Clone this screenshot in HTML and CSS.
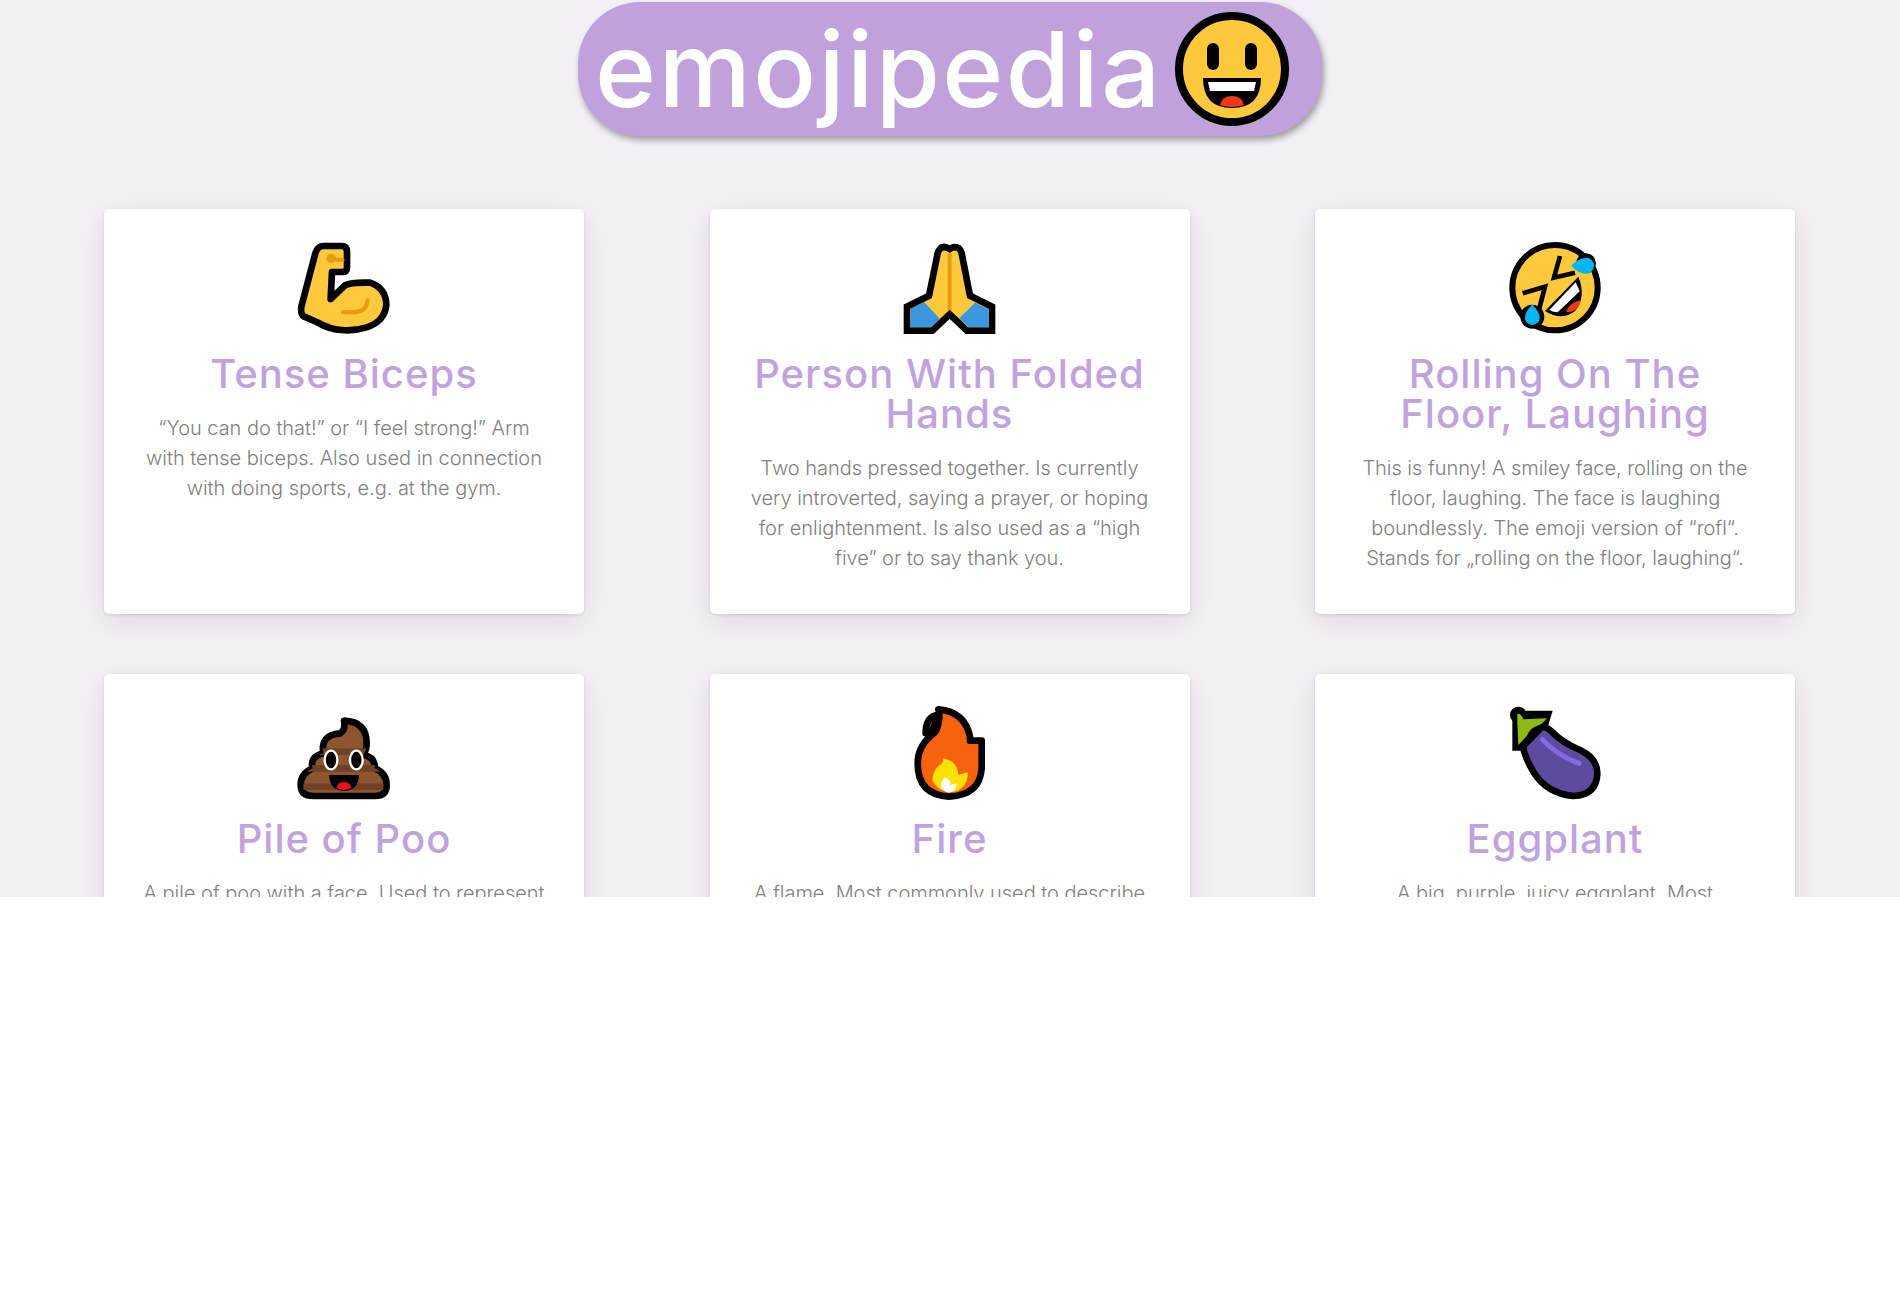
FILE: index.html
```html
<!DOCTYPE html>
<html lang="en">
<head>
    <meta charset="UTF-8">
    <meta name="viewport" content="width=device-width, initial-scale=1.0">
    <title>Emojipedia</title>
    <link rel="stylesheet" href="styles.css">
</head>
<body>
    <div class="page">
        <h1 class="logo">
            <span class="logo-text">emojipedia</span>
            <svg class="logo-face" viewBox="0 0 114 114">
                <circle cx="57" cy="57" r="53" fill="#ffc83d" stroke="#000" stroke-width="8"/>
                <rect x="32" y="31" width="12" height="27" rx="6" fill="#000"/>
                <rect x="70" y="31" width="12" height="27" rx="6" fill="#000"/>
                <path d="M28 66H86Q86 96 57 96Q28 96 28 66Z" fill="#000"/>
                <path d="M33 70H81L79 79H35Z" fill="#fff"/>
                <path d="M45 93Q47 84 57 84Q67 84 69 93Q57 97 45 93Z" fill="#f03a17"/>
            </svg>
        </h1>

        <div class="cards">
            <!-- Первый ряд -->
            <div class="card">
                <svg class="card-icon" viewBox="-3 0 450 360">
                    <path d="M160 63H215Q231 63 231 80V128Q231 141 215 141H186L182 222L225 181Q245 171 300 173Q349 190 349 240Q344 289 290 307Q250 319 215 315Q180 314 140 291L101 274Q91 268 94 245L136 85Q143 63 160 63Z" fill="#ffc83d" stroke="#000" stroke-width="20" stroke-linejoin="round"/>
                    <circle cx="184" cy="100" r="14" fill="#e59c0e"/>
                    <path d="M190 104H218M218 262H255Q290 258 293 226" fill="none" stroke="#e59c0e" stroke-width="12" stroke-linecap="round"/>
                </svg>
                <h2 class="card-title">Tense Biceps</h2>
                <p class="card-text">“You can do that!” or “I feel strong!” Arm<br>with tense biceps. Also used in connection<br>with doing sports, e.g. at the gym.</p>
            </div>

            <div class="card">
                <svg class="card-icon" viewBox="0 0 450 360">
                    <path d="M224 72Q205 60 195 72Q188 78 186 95L162 212L96 245V317H172L224 268L276 317H351V245L285 212L262 95Q260 78 252 70Q240 62 224 72Z" fill="#ffc83d" stroke="#000" stroke-width="20"/>
                    <path d="M106 252L147 231L195 282L168 307H106Z" fill="#3a96dd"/>
                    <path d="M341 252L300 233L253 280L280 307H341Z" fill="#3a96dd"/>
                    <path d="M224 85V255" stroke="#e59c0e" stroke-width="12" fill="none"/>
                </svg>
                <h2 class="card-title">Person With Folded<br>Hands</h2>
                <p class="card-text">Two hands pressed together. Is currently<br>very introverted, saying a prayer, or hoping<br>for enlightenment. Is also used as a “high<br>five” or to say thank you.</p>
            </div>

            <div class="card">
                <svg class="card-icon" viewBox="0 0 450 360">
                    <circle cx="225" cy="188" r="128" fill="#ffc83d" stroke="#000" stroke-width="18"/>
                    <circle cx="318" cy="115" r="30" fill="#000"/>
                    <circle cx="157" cy="275" r="36" fill="#000"/>
                    <path d="M273 122Q295 100 318 98A21 21 0 0 1 318 146Q295 146 273 122Z" fill="#00b7f1"/>
                    <path d="M157 238Q179 262 179 278A22 22 0 0 1 135 278Q135 262 157 238Z" fill="#00b7f1"/>
                    <path d="M240 93L222 158L285 143M128 205L195 185L178 250" fill="none" stroke="#000" stroke-width="14"/>
                    <path d="M195 258L295 155Q320 215 285 258Q245 290 195 258Z" fill="#000"/>
                    <path d="M208 255L287 172L299 199L233 262Q220 262 208 255Z" fill="#fff"/>
                    <path d="M258 262Q265 235 302 225Q300 245 280 258Q270 262 258 262Z" fill="#f03a17"/>
                </svg>
                <h2 class="card-title">Rolling On The<br>Floor, Laughing</h2>
                <p class="card-text">This is funny! A smiley face, rolling on the<br>floor, laughing. The face is laughing<br>boundlessly. The emoji version of “rofl“.<br>Stands for „rolling on the floor, laughing“.</p>
            </div>

            <!-- Второй ряд -->
            <div class="card">
                <svg class="card-icon" viewBox="-3 -30 450 360">
                    <defs>
                        <clipPath id="poo-shape">
                            <path d="M222 62Q290 65 290 130Q290 150 280 165Q315 170 315 205Q350 220 350 255Q350 288 315 288H130Q92 288 92 255Q92 220 128 205Q118 170 160 160Q150 105 210 100Q228 90 222 62Z"/>
                        </clipPath>
                    </defs>
                    <path d="M222 62Q290 65 290 130Q290 150 280 165Q315 170 315 205Q350 220 350 255Q350 288 315 288H130Q92 288 92 255Q92 220 128 205Q118 170 160 160Q150 105 210 100Q228 90 222 62Z" fill="#8e562e" stroke="#000" stroke-width="20" stroke-linejoin="round"/>
                    <g clip-path="url(#poo-shape)">
                        <rect x="100" y="145" width="240" height="20" fill="#6d4226"/>
                        <rect x="100" y="195" width="240" height="20" fill="#6d4226"/>
                        <rect x="100" y="250" width="240" height="20" fill="#6d4226"/>
                    </g>
                    <ellipse cx="183" cy="180" rx="19" ry="28" fill="#000" stroke="#fff" stroke-width="7"/>
                    <ellipse cx="259" cy="180" rx="19" ry="28" fill="#000" stroke="#fff" stroke-width="7"/>
                    <path d="M177 225H267Q265 272 222 273Q180 272 177 225Z" fill="#000"/>
                    <path d="M200 264Q202 246 222 246Q242 246 244 264Q222 276 200 264Z" fill="#e81224"/>
                </svg>
                <h2 class="card-title">Pile of Poo</h2>
                <p class="card-text">A pile of poo with a face. Used to represent</p>
            </div>

            <div class="card">
                <svg class="card-icon" viewBox="0 -30 450 360">
                    <path d="M190 44Q152 50 152 100L170 98Z" fill="#f7630c" stroke="#000" stroke-width="20" stroke-linejoin="round"/>
                    <path d="M190 28Q270 35 285 110V122H320V205Q315 285 222 290Q128 285 128 190Q128 140 170 105Q188 95 192 60Q195 40 190 28Z" fill="#f7630c" stroke="#000" stroke-width="20" stroke-linejoin="round"/>
                    <path d="M205 175Q250 185 250 225L278 217Q280 260 240 275Q190 280 172 240Q175 205 195 195Q205 190 205 175Z" fill="#fce100"/>
                    <path d="M210 232Q230 240 225 255L245 250Q245 275 222 278Q195 275 198 250Q200 240 210 232Z" fill="#fff"/>
                </svg>
                <h2 class="card-title">Fire</h2>
                <p class="card-text">A flame. Most commonly used to describe</p>
            </div>

            <div class="card">
                <svg class="card-icon" viewBox="0 -30 450 360">
                    <path d="M150 80Q190 70 215 95Q250 130 300 150Q352 175 352 220Q350 285 280 288Q200 280 160 215Q130 165 125 120Z" fill="#5c4b9f" stroke="#000" stroke-width="20" stroke-linejoin="round"/>
                    <circle cx="115" cy="45" r="25" fill="#000"/>
                    <path d="M97 32H218L205 75L130 152H97Z" fill="#000"/>
                    <path d="M112 42Q122 38 130 58L200 55Q190 72 170 78Q150 85 142 105Q130 120 115 135L112 70Z" fill="#8dbb14"/>
                    <path d="M187 118Q230 165 297 190" fill="none" stroke="#8668e0" stroke-width="15" stroke-linecap="round"/>
                </svg>
                <h2 class="card-title">Eggplant</h2>
                <p class="card-text">A big, purple, juicy eggplant. Most</p>
            </div>
        </div>
    </div>
</body>
</html>
```

FILE: styles.css
```css
body {
    margin: 0;
    background-color: #ffffff;
    font-family: "Inter", "Open Sans", sans-serif;
}

.page {
    height: 897px;
    overflow: hidden;
    background-color: #f2f0f5;
    padding-top: 2px;
    box-sizing: border-box;
}

.logo {
    display: flex;
    align-items: center;
    box-sizing: border-box;
    width: 744px;
    height: 134px;
    margin: 0 auto;
    padding-left: 17px;
    background-color: #bfa2dc;
    border-radius: 62px;
    box-shadow: 2px 4px 6px rgba(0, 0, 0, 0.35);
    color: #ffffff;
    font-size: 104px;
    font-weight: 500;
    line-height: 134px;
    letter-spacing: 2.4px;
}

.logo-text {
    width: 580px;
    white-space: nowrap;
}

.logo-face {
    width: 114px;
    height: 114px;
}

.cards {
    display: grid;
    grid-template-columns: repeat(3, 480px);
    grid-auto-rows: 405px;
    justify-content: space-between;
    row-gap: 60px;
    margin-top: 73px;
    padding: 0 105px 0 104px;
}

.card {
    box-sizing: border-box;
    padding-top: 16px;
    background-color: #ffffff;
    border-radius: 5px;
    box-shadow: 0 1px 3px rgba(0, 0, 0, 0.12), 0 8px 30px rgba(0, 0, 0, 0.09);
    text-align: center;
}

.card-icon {
    display: block;
    width: 150px;
    height: 120px;
    margin: 0 auto;
}

.card-title {
    margin: 9px 0 19px;
    color: #c0a3dd;
    font-size: 40px;
    font-weight: 500;
    line-height: 40px;
    letter-spacing: 1px;
    white-space: nowrap;
}

.card-text {
    margin: 0;
    color: #808080;
    font-size: 20px;
    font-weight: 300;
    line-height: 30px;
    letter-spacing: -0.03px;
    white-space: nowrap;
}
```
